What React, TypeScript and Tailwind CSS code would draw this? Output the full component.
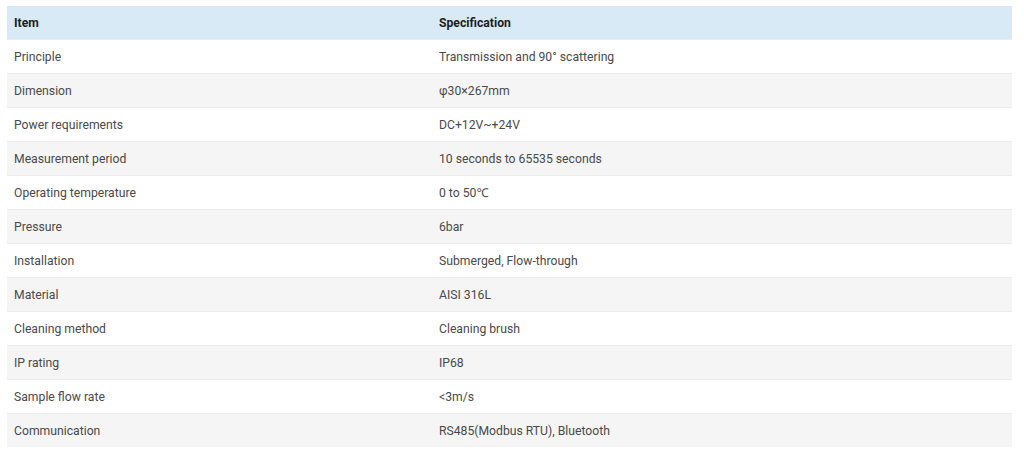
import React from "react";

const rows: [string, string][] = [
  ["Principle", "Transmission and 90° scattering"],
  ["Dimension", "φ30×267mm"],
  ["Power requirements", "DC+12V~+24V"],
  ["Measurement period", "10 seconds to 65535 seconds"],
  ["Operating temperature", "0 to 50℃"],
  ["Pressure", "6bar"],
  ["Installation", "Submerged, Flow-through"],
  ["Material", "AISI 316L"],
  ["Cleaning method", "Cleaning brush"],
  ["IP rating", "IP68"],
  ["Sample flow rate", "<3m/s"],
  ["Communication", "RS485(Modbus RTU), Bluetooth"],
];

export default function App() {
  return (
    <div className="w-[1024px] h-[453px] bg-white pt-[6px] pl-[7px]" style={{ fontFamily: "Roboto, 'Noto Sans', sans-serif" }}>
      <div className="w-[1005px]">
        <div className="flex h-[33px] items-center pt-[2px] bg-[#d8eaf5] text-[12.2px] font-bold text-[#1e1e1e]">
          <div className="w-[425px] pl-[7px]">Item</div>
          <div className="pl-[7px]">Specification</div>
        </div>
        {rows.map(([a, b], i) => (
          <div
            key={a}
            className={
              "flex h-[34px] items-center pt-[2px] text-[12.2px] text-[#4a4a4a] border-t border-[#ececec] " +
              (i % 2 === 1 ? "bg-[#f5f5f5]" : "bg-white")
            }
          >
            <div className="w-[425px] pl-[7px]">{a}</div>
            <div className="pl-[7px]">{b}</div>
          </div>
        ))}
      </div>
    </div>
  );
}
